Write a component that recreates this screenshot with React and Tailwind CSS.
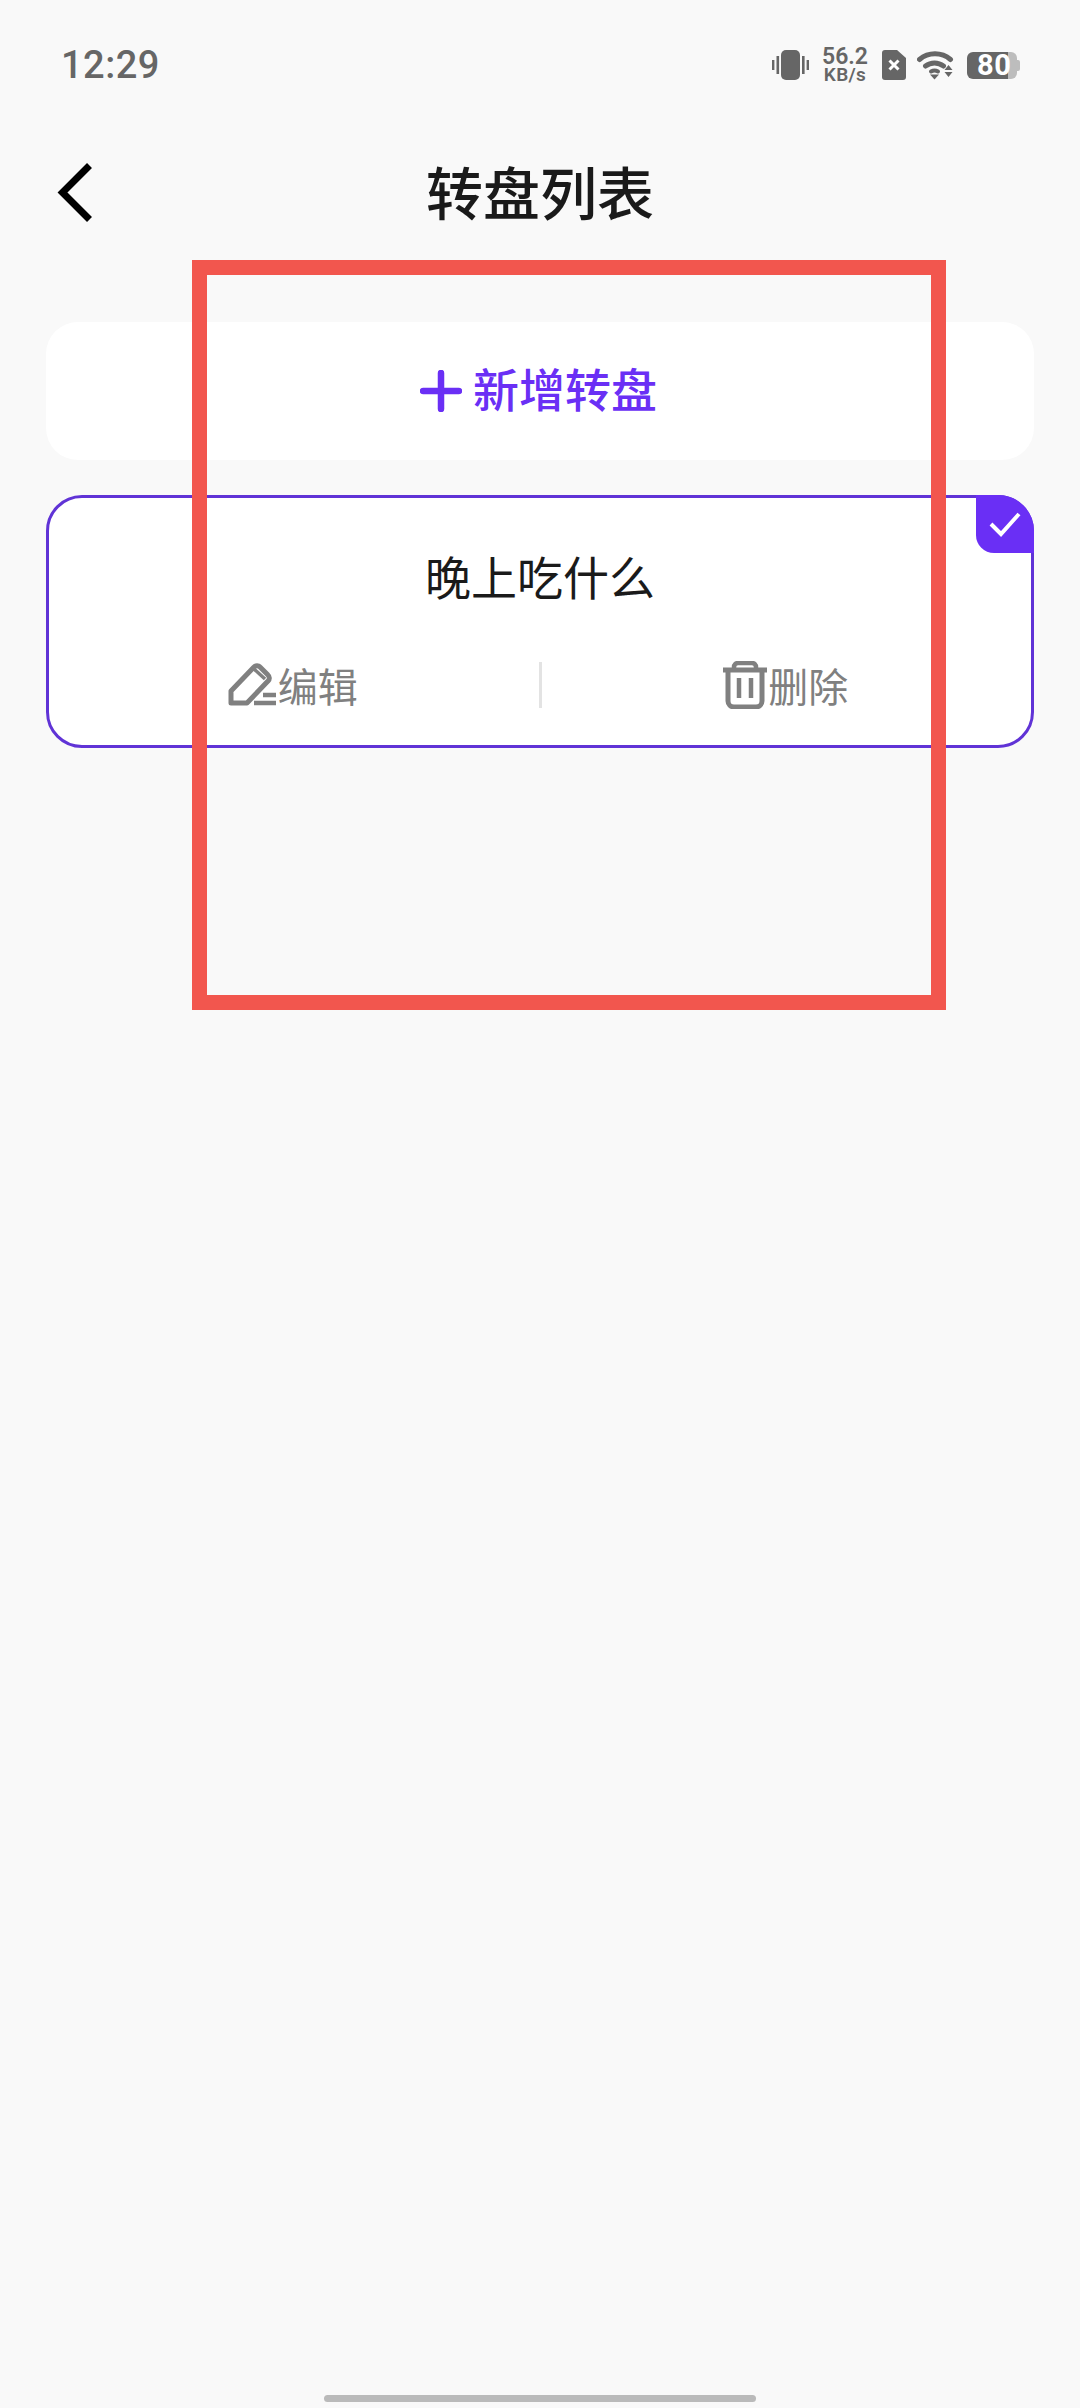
import React from "react";

const StatusIcons = () => (
  <div className="mb-[4px] flex items-center text-[#666666]">
    {/* vibrate */}
    <svg width="37" height="30" viewBox="0 0 37 30" className="mr-[12px]">
      <rect x="9" y="0" width="19" height="30" rx="5" fill="#666666" />
      <rect x="0" y="10" width="2.4" height="10" fill="#666666" />
      <rect x="4.500" y="6" width="2.600" height="18" fill="#666666" />
      <rect x="30" y="6" width="2.600" height="18" fill="#666666" />
      <rect x="34.600" y="10" width="2.400" height="10" fill="#666666" />
    </svg>
    <div className="mr-[13px] flex w-[48px] flex-col items-center font-['Roboto',sans-serif] font-semibold">
      <span className="text-[23px] leading-[19px]">56.2</span>
      <span className="text-[19px] leading-[17px] tracking-[0.3px]">KB/s</span>
    </div>
    {/* sim */}
    <svg width="24" height="30" viewBox="0 0 24 30" className="mr-[11px]">
      <path d="M3 0h12l9 8v19a3 3 0 0 1-3 3H3a3 3 0 0 1-3-3V3a3 3 0 0 1 3-3z" fill="#666666" />
      <path d="M7.500 10.500l9 9M16.500 10.500l-9 9" stroke="#fff" strokeWidth="3" />
    </svg>
    {/* wifi */}
    <svg width="38" height="30" viewBox="0 0 38 30" className="mr-[12px]">
      <path d="M2.500 9.500a24 24 0 0 1 31 0" fill="none" stroke="#666666" strokeWidth="5" strokeLinecap="round" />
      <path d="M8.500 16a15 15 0 0 1 18 0" fill="none" stroke="#666666" strokeWidth="5" strokeLinecap="round" />
      <path d="M14 21.500a7 7 0 0 1 7 0" fill="none" stroke="#666666" strokeWidth="4" strokeLinecap="round" />
      <path d="M13 24.500h9l-4.500 5z" fill="#666666" />
      <path d="M31.500 15l4 5h-8zM27.500 22h8l-4 5z" fill="#666666" />
    </svg>
    {/* battery */}
    <div className="relative flex h-[27px] w-[53px] items-center">
      <div className="absolute inset-y-0 left-0 w-[41px] rounded-l-[6px] bg-[#666666]" />
      <div className="absolute inset-y-0 left-[41px] w-[9px] rounded-r-[6px] bg-[#bdbdbd]" />
      <div className="absolute left-[50px] top-[8px] h-[11px] w-[3px] rounded-r-[2px] bg-[#bdbdbd]" />
      <span className="relative ml-[10px] font-['Roboto',sans-serif] text-[29px] font-bold leading-[27px] tracking-[0.5px] text-white">80</span>
    </div>
  </div>
);

const ActionButton = ({ icon, label }) => (
  <div className="flex flex-1 items-center justify-center pr-[2px]">
    {icon}
    <span className="text-[40px] leading-[50px] text-[#808080]">{label}</span>
  </div>
);

const App = () => {
  return (
    <div className="relative flex h-[2408px] w-[1080px] flex-col overflow-hidden bg-[#f9f9f9] font-['Noto_Sans_CJK_SC',sans-serif]">
      {/* Status bar */}
      <div className="flex h-[87px] items-end justify-between pl-[61px] pr-[60px]">
        <span className="font-['Roboto',sans-serif] text-[38px] font-medium leading-[44px] tracking-[0.5px] text-[#666666]">12:29</span>
        <StatusIcons />
      </div>

      {/* Header */}
      <div className="relative mt-[71px] flex h-[70px] items-center justify-center">
        <svg width="38" height="65" viewBox="0 0 38 65" className="absolute left-[56px] top-[2px]">
          <path d="M33.500 5.500L6.500 32.500l27 27" fill="none" stroke="#000" strokeWidth="7" />
        </svg>
        <h1 className="relative -top-[3px] text-[57px] font-medium leading-[70px] text-[#1a1a1a]">转盘列表</h1>
      </div>

      <div className="mt-[94px] flex flex-col gap-[35px] px-[46px]">
        {/* Add */}
        <div className="flex h-[138px] items-center justify-center rounded-[32px] bg-white pr-[3px]">
          <svg width="42" height="42" viewBox="0 0 42 42" className="mr-[11px]">
            <path d="M21 3v36M3 21h36" stroke="#6a2ff5" strokeWidth="6.500" strokeLinecap="round" />
          </svg>
          <span className="relative -top-[4px] text-[46px] font-medium leading-[60px] text-[#6a2ff5]">新增转盘</span>
        </div>

        {/* Card */}
        <div className="relative h-[253px] rounded-[36px] border-[3px] border-[#6033d6] bg-white">
          <div className="absolute -right-[3px] -top-[3px] flex h-[58px] w-[58px] items-center justify-center rounded-bl-[18px] rounded-tr-[36px] bg-[#6a2ff5]">
            <svg width="32" height="26" viewBox="0 0 32 26">
              <path d="M2 13l10 10L30 3" fill="none" stroke="#fff" strokeWidth="4" />
            </svg>
          </div>
          <div className="mt-[47px] text-center text-[46px] font-normal leading-[60px] text-[#1a1a1a]">晚上吃什么</div>
          <div className="mt-[55px] flex items-center">
            <ActionButton
              label="编辑"
              icon={
                <svg width="50" height="44" viewBox="0 0 50 44">
                  <path d="M3 40V28L26 4a4 4 0 0 1 6 0l8 8a4 4 0 0 1 0 6L19 40z" fill="none" stroke="#808080" strokeWidth="5" strokeLinejoin="round" />
                  <path d="M26 6l11 10" fill="none" stroke="#808080" strokeWidth="3.500" />
                  <path d="M35 32h13M26 40h22" fill="none" stroke="#808080" strokeWidth="4.500" />
                </svg>
              }
            />
            <div className="h-[46px] w-[3px] bg-[#e3e3e3]" />
            <ActionButton
              label="删除"
              icon={
                <svg width="46" height="48" viewBox="0 0 46 48">
                  <path d="M1 9h44" stroke="#808080" strokeWidth="5" />
                  <path d="M12 8V6a4 4 0 0 1 4-4h14a4 4 0 0 1 4 4v2" fill="none" stroke="#808080" strokeWidth="4.500" />
                  <path d="M6 10v30a6 6 0 0 0 6 6h22a6 6 0 0 0 6-6V10" fill="none" stroke="#808080" strokeWidth="5" />
                  <path d="M17 17v20M29 17v20" stroke="#808080" strokeWidth="4.500" />
                </svg>
              }
            />
          </div>
        </div>
      </div>

      {/* Home indicator */}
      <div className="absolute bottom-[6px] left-[324px] h-[7px] w-[432px] rounded-full bg-[#bababa]" />

      {/* Red annotation frame */}
      <div className="absolute left-[192px] top-[260px] h-[750px] w-[754px] border-[15px] border-[#f2564e]" />
    </div>
  );
};

export default App;
